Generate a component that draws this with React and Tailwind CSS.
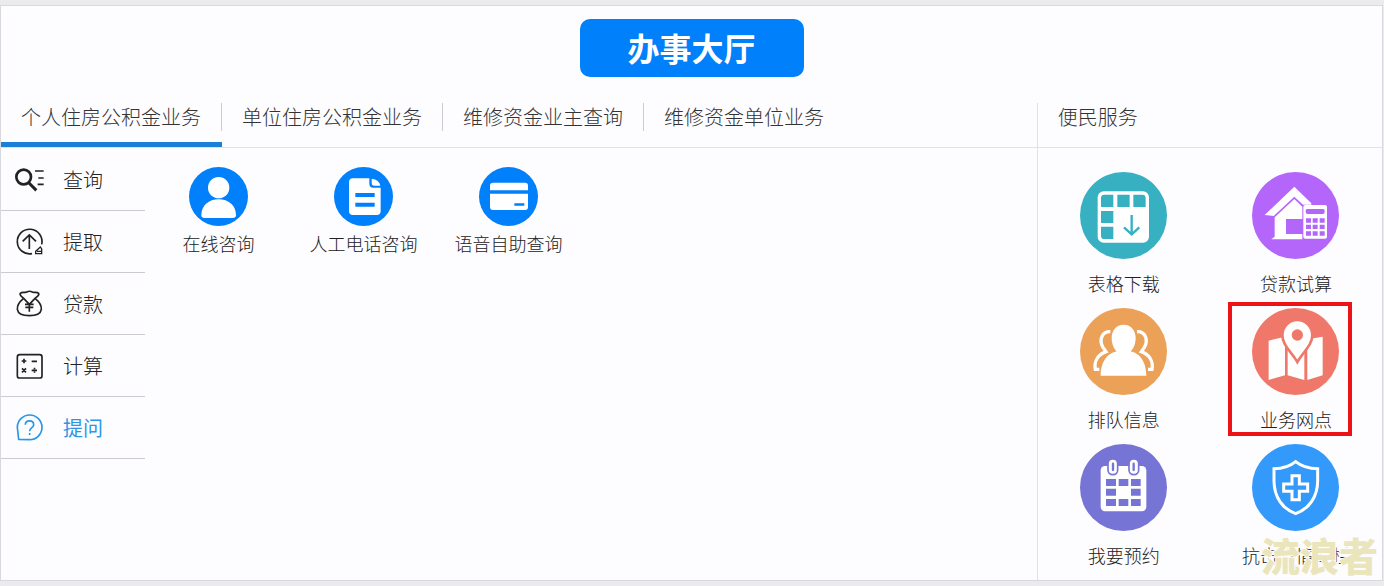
import { useState } from "react";

const tabs = ["个人住房公积金业务", "单位住房公积金业务", "维修资金业主查询", "维修资金单位业务"];

const SearchIcon = () => (
  <svg viewBox="0 0 90 90" className="w-[30px] h-[30px]" fill="none" stroke="currentColor">
    <circle cx="26" cy="36" r="22" strokeWidth="8" />
    <path d="M42 54L64 76" strokeWidth="9" />
    <path d="M60 18H86M70 39H86M68 58H86" strokeWidth="5" />
  </svg>
);

const WithdrawIcon = () => (
  <svg viewBox="0 0 90 90" className="w-[30px] h-[30px]" fill="none" stroke="currentColor" strokeWidth="5">
    <path d="M51 80A37 37 0 1 1 80 52" />
    <path d="M43 66V25M23 43L43 24L63 43" />
    <path d="M62 80V73L76 60L80 66V80ZM66 73H78" strokeWidth="4" />
  </svg>
);

const LoanIcon = () => (
  <svg viewBox="0 0 90 90" className="w-[30px] h-[30px]" fill="none" stroke="currentColor" strokeWidth="5" strokeLinejoin="round">
    <path d="M26 28C19 22 12 18 16 13C21 8 30 12 35 9C41 6 47 6 52 9C58 12 66 8 71 13C74 19 66 23 60 28" />
    <path d="M26 28C16 36 6 49 7 61C9 74 23 80 43 80S77 74 79 61C80 49 70 36 60 28" />
    <path d="M26 28L43 46L60 28M30 46H56M31 55H55M43 46V68" />
  </svg>
);

const CalcIcon = () => (
  <svg viewBox="0 0 90 90" className="w-[30px] h-[30px]" fill="none" stroke="currentColor" strokeWidth="5">
    <rect x="7" y="11" width="74" height="70" rx="7" />
    <path d="M20 30H34M27 23V37M50 31H66" />
    <path d="M21 52L33 64M33 52L21 64M50 58H66" />
    <path d="M56 53H61M56 63H61" />
  </svg>
);

const AskIcon = () => (
  <svg viewBox="0 0 90 90" className="w-[30px] h-[30px]" fill="none" stroke="currentColor" strokeWidth="5" strokeLinejoin="round">
    <path d="M11 79L7 43A37 37 0 1 1 44 80Z" />
    <path d="M31 35C31 20 56 20 56 35C56 45 44 43 44 55M44 60V66" />
  </svg>
);

const menu = [
  { name: "查询", Icon: SearchIcon },
  { name: "提取", Icon: WithdrawIcon },
  { name: "贷款", Icon: LoanIcon },
  { name: "计算", Icon: CalcIcon },
  { name: "提问", Icon: AskIcon },
];

const UserIcon = () => (
  <svg viewBox="0 0 177 177" className="w-full h-full" fill="#fff">
    <circle cx="89" cy="62" r="32" />
    <path d="M47 153Q37 153 37 145C37 115 60 97 89 97S141 115 141 145Q141 153 131 153Z" />
  </svg>
);

const DocIcon = () => (
  <svg viewBox="0 0 177 177" className="w-full h-full" fill="#fff">
    <path d="M57 34H106V50Q106 62 118 62H140V132Q140 144 128 144H57Q45 144 45 132V46Q45 34 57 34Z" />
    <path d="M113 35Q136 38 139 56H121Q113 56 113 48Z" />
    <path d="M64 78H122V90H64ZM64 107H122V119H64Z" fill="#0080fb" />
  </svg>
);

const CardIcon = () => (
  <svg viewBox="0 0 177 177" className="w-full h-full" fill="#fff">
    <rect x="33" y="47" width="114" height="82" rx="9" />
    <path d="M33 70H147V80H33ZM106 109H136V116H106Z" fill="#0080fb" />
  </svg>
);

const actions = [
  { name: "在线咨询", Icon: UserIcon },
  { name: "人工电话咨询", Icon: DocIcon },
  { name: "语音自助查询", Icon: CardIcon },
];

const TableIcon = () => (
  <svg viewBox="0 0 261 261" className="w-full h-full">
    <rect x="53" y="58" width="154" height="154" rx="18" fill="#fff" />
    <path
      d="M73 68H100V105H63V78Q63 68 73 68ZM112 68H149V105H112ZM160 68H187Q197 68 197 78V105H160ZM63 117H100V153H63ZM63 164H100V201H73Q63 201 63 191Z"
      fill="#37b1c2"
    />
    <path d="M155 129V186M132 166L155 187L178 166" fill="none" stroke="#37b1c2" strokeWidth="7" />
  </svg>
);

const HouseIcon = () => (
  <svg viewBox="0 0 261 261" className="w-full h-full" fill="#fff">
    <path d="M127 44L178 94V98H153L127 74L65 132L38 129Z" />
    <path fillRule="evenodd" d="M127 81L151 104V202H58L68 194V136ZM102 141V186H151V141Z" />
    <rect x="154" y="99" width="71" height="101" rx="6" />
    <path
      d="M165 111H214Q218 111 218 118Q218 126 214 126H165Q161 126 161 118Q161 111 165 111Z"
      fill="#b466fb"
    />
    <path
      d="M162 139H177V152H162ZM182 139H197V152H182ZM203 139H218V152H203ZM162 158H177V171H162ZM182 158H197V171H182ZM203 158H218V171H203ZM162 178H177V191H162ZM182 178H197V191H182ZM203 178H218V191H203Z"
      fill="#b466fb"
    />
  </svg>
);

const PeopleIcon = () => (
  <svg viewBox="0 0 261 261" className="w-full h-full" fill="#fff">
    <path
      d="M91 71C66 70 56 96 69 118L78 131C52 141 42 162 46 184H58M171 71C196 70 206 96 193 118L184 131C210 141 220 162 216 184H204"
      fill="none"
      stroke="#fff"
      strokeWidth="10"
    />
    <path d="M131 50C154 50 167 69 167 90C167 108 160 123 152 130C176 136 198 155 199 203H62C63 155 86 136 110 130C102 123 95 108 95 90C95 69 108 50 131 50Z" />
  </svg>
);

const MapIcon = () => (
  <svg viewBox="0 0 261 261" className="w-full h-full" fill="#fff">
    <path d="M50 98L99 86V202L50 216ZM107 110H157V216L107 202ZM166 94L212 86V202L166 216Z" />
    <path
      d="M136 36C112 36 91 55 91 82C91 111 118 131 136 162C154 131 181 111 181 82C181 55 160 36 136 36Z"
      stroke="#f0786a"
      strokeWidth="8"
    />
    <circle cx="136" cy="81" r="17" fill="#f0786a" />
  </svg>
);

const CalendarIcon = () => (
  <svg viewBox="0 0 261 261" className="w-full h-full">
    <rect x="62" y="66" width="137" height="136" rx="13" fill="#fff" />
    <g fill="#fff" stroke="#7674d4" strokeWidth="5">
      <rect x="84" y="45" width="29" height="47" rx="14" />
      <rect x="147" y="45" width="29" height="47" rx="14" />
    </g>
    <path d="M99 59V78M161 59V78" stroke="#7674d4" strokeWidth="7" strokeLinecap="round" />
    <path
      d="M78 105H108V126H78ZM116 105H145V126H116ZM153 105H182V126H153ZM78 134H108V155H78ZM153 134H182V155H153ZM78 165H108V186H78ZM116 165H145V186H116ZM153 165H182V186H153Z"
      fill="#7674d4"
    />
  </svg>
);

const ShieldIcon = () => (
  <svg viewBox="0 0 261 261" className="w-full h-full" fill="none" stroke="#fff" strokeWidth="9">
    <path d="M131 53C114 67 90 74 66 74V110C66 159 92 195 131 209C170 195 197 159 197 110V74C172 74 148 67 131 53Z" />
    <path d="M120 95H142V120H167V142H142V167H120V142H95V120H120Z" />
  </svg>
);

const services = [
  { name: "表格下载", Icon: TableIcon, color: "bg-[#37b1c2]" },
  { name: "贷款试算", Icon: HouseIcon, color: "bg-[#b466fb]" },
  { name: "排队信息", Icon: PeopleIcon, color: "bg-[#eba258]" },
  { name: "业务网点", Icon: MapIcon, color: "bg-[#f0786a]", marked: true },
  { name: "我要预约", Icon: CalendarIcon, color: "bg-[#7674d4]" },
  { name: "抗击疫情专栏", Icon: ShieldIcon, color: "bg-[#3399fa]" },
];

const ServiceItem = ({ name, Icon, color, marked }) => (
  <a href="#" className="relative flex flex-col items-center pb-[13px]">
    <span className={`w-[87px] h-[87px] rounded-full ${color}`}>
      <Icon />
    </span>
    <span className="mt-3 text-lg leading-6 whitespace-nowrap">{name}</span>
    {marked && <span className="absolute -top-1.5 bottom-2 left-[18px] right-[30px] border-4 border-[#ec1216]" />}
  </a>
);

const App = () => {
  const [activeTab, setActiveTab] = useState(0);
  const [activeMenu, setActiveMenu] = useState(4);

  return (
    <div className="min-h-screen bg-[#ebeaec] pt-[5px] pb-1.5 pr-px font-['Noto_Sans_CJK_SC',sans-serif] font-light text-[#222]">
      <div className="relative border border-[#d9d8dc] bg-[#fdfcff]">
        <header className="flex justify-center pt-[13px] pb-[26px]">
          <h1 className="w-56 rounded-[10px] bg-[#0080fb] pb-0.5 text-center text-[32px] leading-[56px] font-bold text-white">
            办事大厅
          </h1>
        </header>

        <div className="flex">
          <section className="flex-1 min-w-0">
            <div role="tablist" className="flex items-start h-[45px] border-b border-[#e2e1e5]">
              {tabs.map((tab, i) => (
                <button
                  key={tab}
                  role="tab"
                  aria-selected={i === activeTab}
                  onClick={() => setActiveTab(i)}
                  className={`h-11 pb-[11px] border-b-[5px] ${i === activeTab ? "border-[#1a7fd8]" : "border-transparent"}`}
                >
                  <span
                    className={`block px-5 text-xl leading-7 whitespace-nowrap text-[#333] ${
                      i < tabs.length - 1 ? "border-r border-[#cccbd0]" : ""
                    }`}
                  >
                    {tab}
                  </span>
                </button>
              ))}
            </div>

            <div className="flex">
              <nav className="w-36 shrink-0 pt-px">
                {menu.map(({ name, Icon }, i) => (
                  <button
                    key={name}
                    onClick={() => setActiveMenu(i)}
                    className={`flex items-center gap-[18px] w-full h-[62px] pl-3.5 border-b border-[#cccbd0] text-xl ${
                      i === activeMenu ? "font-normal text-[#2a97e4]" : "text-[#222]"
                    }`}
                  >
                    <Icon />
                    {name}
                  </button>
                ))}
              </nav>

              <div className="flex flex-wrap content-start pt-[19px] pl-px">
                {actions.map(({ name, Icon }) => (
                  <a key={name} href="#" className="flex flex-col items-center w-[145px]">
                    <span className="w-[59px] h-[59px] rounded-full bg-[#0080fb]">
                      <Icon />
                    </span>
                    <span className="mt-[5px] text-lg leading-6 whitespace-nowrap">{name}</span>
                  </a>
                ))}
              </div>
            </div>
          </section>

          <aside className="w-1/4 border-l border-[#e2e1e5]">
            <h2 className="h-[45px] px-5 border-b border-[#e2e1e5] text-xl leading-7 text-[#333]">便民服务</h2>
            <div className="grid grid-cols-2 pt-6">
              {services.map((item) => (
                <ServiceItem key={item.name} {...item} />
              ))}
            </div>
          </aside>
        </div>

        {/* watermark */}
        <span className="absolute right-1 bottom-[3px] text-[39px] leading-[46px] font-black text-[#ebe5bb] pointer-events-none [-webkit-text-stroke:2px_#fdfcff] [paint-order:stroke_fill]">
          流浪者
        </span>
      </div>
    </div>
  );
};

export default App;
